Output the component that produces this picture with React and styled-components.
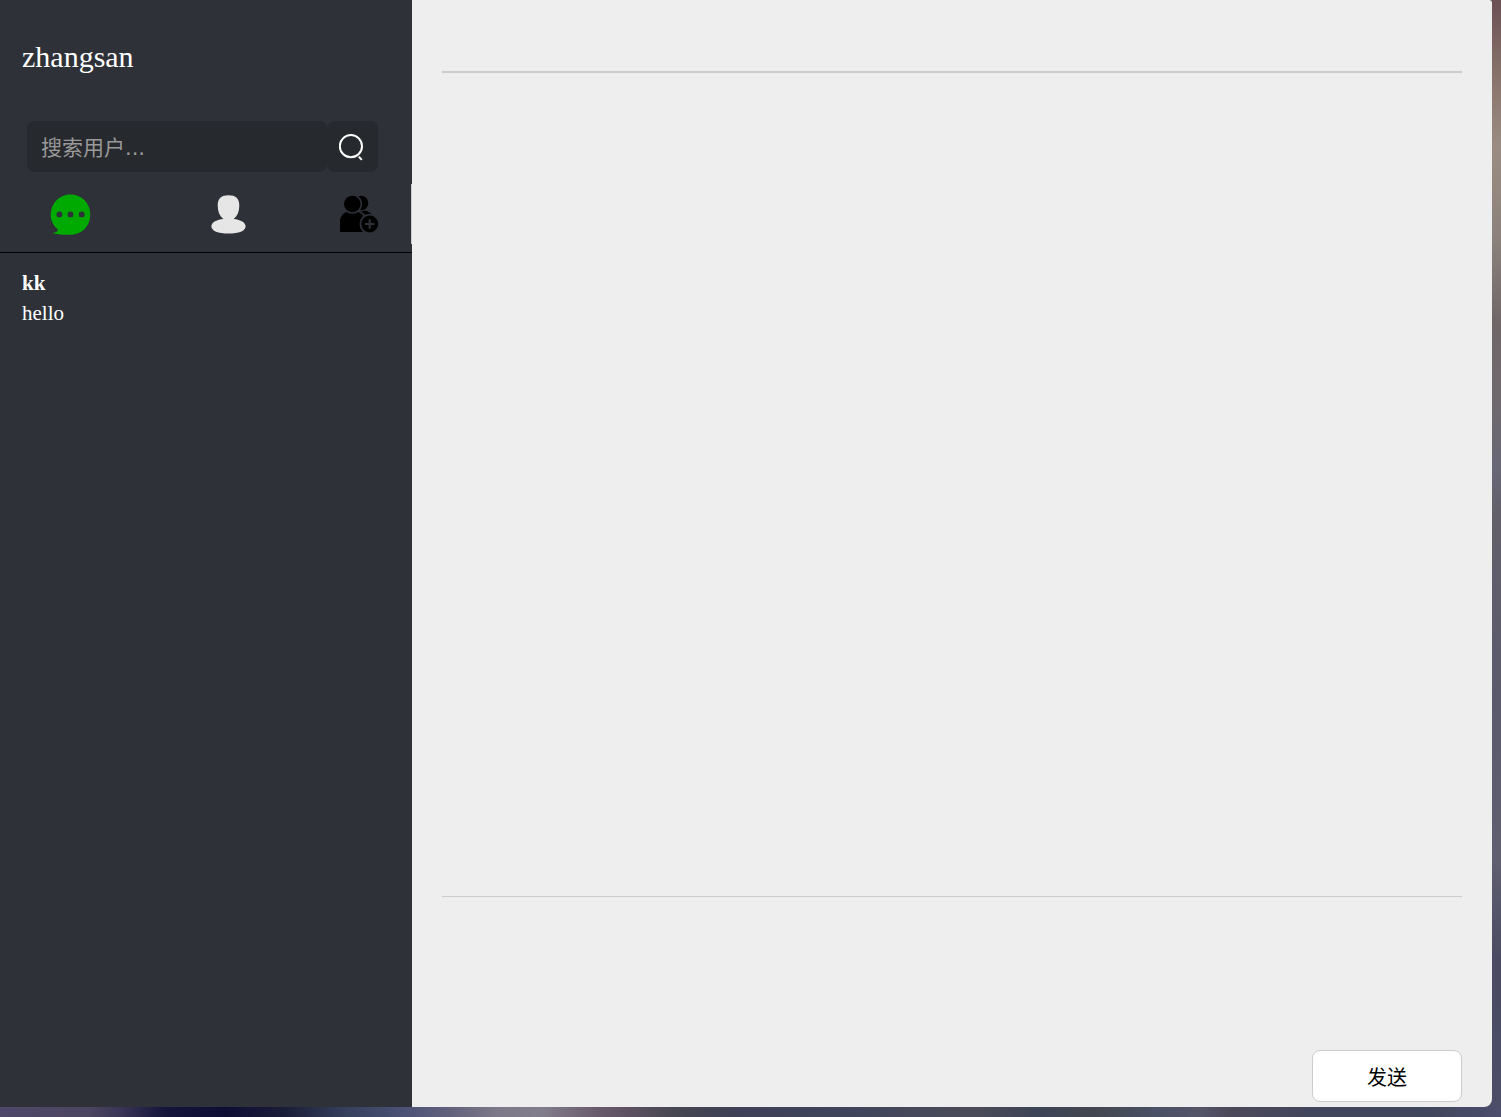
import React from "react";
import styled, { createGlobalStyle } from "styled-components";

const SIDEBAR_WIDTH = 412;
const SIDEBAR_COLOR = "#2e3138";
const FIELD_COLOR = "#26292d";
const LINE_COLOR = "#ccc";
const PANEL_COLOR = "#eee";
const UI_FONT = `"DejaVu Sans", "Noto Sans CJK SC", sans-serif`;

const GlobalStyle = createGlobalStyle`
    * {
        box-sizing: border-box;
    }
    body {
        margin: 0;
        font-family: "Liberation Serif", "Noto Sans CJK SC", serif;
    }
`;

const Desktop = styled.div`
    display: flex;
    min-height: 100vh;
    padding: 0 9px 10px 0;
    background:
        linear-gradient(to right,
            #50486a 0%, #4c4560 6%, #3a3556 8%, #15143a 11%, #0e0e34 15%,
            #1a1d38 19%, #35405c 23%, #4c5276 27%, #62617c 30%, #7c7889 33%,
            #827d8c 36%, #68596a 40%, #5c5060 42%, #464751 45%, #3d4056 49%,
            #40455c 57%, #4a4b58 65%, #3d4357 69%, #434750 73%, #4a5066 77%,
            #545468 80%, #4c485a 82%, #42465c 87%, #40465c 95%, #4c4e6c 100%)
        left bottom / 100% 10px no-repeat,
        linear-gradient(to bottom,
            #6b5054 0%, #857068 6%, #9a8c82 13%, #8d837c 21%, #706668 29%,
            #6f696e 36%, #686776 42%, #625f6a 46%, #5a5a6c 63%, #605f70 77%,
            #4a4a62 86%, #4c4e68 100%);
`;

const ChatWindow = styled.div`
    display: flex;
    flex: 1;
    border-radius: 0 3px 8px 0;
    overflow: hidden;
    background-color: ${PANEL_COLOR};
`;

const Sidebar = styled.aside`
    flex: 0 0 ${SIDEBAR_WIDTH}px;
    background-color: ${SIDEBAR_COLOR};
    color: white;
`;

const UserName = styled.h1`
    margin: 0;
    padding: 39px 22px 46px;
    font-size: 30px;
    font-weight: normal;
    line-height: 36px;
`;

const SearchForm = styled.form`
    display: flex;
    margin: 0 34px 12px 27px;
`;

const SearchInput = styled.input`
    flex: 1;
    min-width: 0;
    height: 51px;
    padding: 2px 14px 0;
    border: 0;
    border-radius: 8px;
    outline: none;
    background-color: ${FIELD_COLOR};
    color: white;
    font-family: ${UI_FONT};
    font-size: 21px;

    &::placeholder {
        color: #999;
        opacity: 1;
    }
`;

const SearchButton = styled.button`
    display: flex;
    align-items: center;
    justify-content: center;
    width: 51px;
    height: 51px;
    padding: 0;
    border: 0;
    border-radius: 8px;
    background-color: ${FIELD_COLOR};
    cursor: pointer;
`;

const Tabs = styled.nav`
    display: grid;
    grid-template-columns: 34% 43% 1fr;
    padding-bottom: 8px;
    border-bottom: 1px solid black;
`;

const Tab = styled.button`
    display: flex;
    align-items: center;
    justify-content: center;
    height: 60px;
    padding: 0 ${props => props.$last ? 10 : 0}px 0 0;
    border: 0;
    border-right: ${props => props.$last ? `1px solid ${LINE_COLOR}` : "0"};
    background: none;
    cursor: pointer;
`;

const ChatList = styled.ul`
    margin: 0;
    padding: 15px 0 0;
    list-style: none;
`;

const ChatItem = styled.li`
    padding: 0 22px;
    font-size: 21px;
    line-height: 30px;
`;

const ChatName = styled.div`
    font-weight: bold;
`;

const ChatPreview = styled.div`
    font-weight: normal;
`;

const Conversation = styled.main`
    display: flex;
    flex: 1;
    flex-direction: column;
    min-width: 0;
    padding: 0 30px 5px;
`;

const ConversationHeader = styled.header`
    height: 73px;
    border-bottom: 2px solid ${LINE_COLOR};
`;

const MessageList = styled.section`
    flex: 1;
`;

const Editor = styled.form`
    display: flex;
    flex-direction: column;
    align-items: flex-end;
    border-top: 1px solid ${LINE_COLOR};
`;

const MessageInput = styled.textarea`
    width: 100%;
    height: 153px;
    padding: 12px 0;
    border: 0;
    outline: none;
    resize: none;
    background: none;
    font-family: ${UI_FONT};
    font-size: 21px;
`;

const SendButton = styled.button`
    width: 150px;
    height: 52px;
    padding: 0;
    border: 1px solid ${LINE_COLOR};
    border-radius: 8px;
    background-color: white;
    color: black;
    font-family: ${UI_FONT};
    font-size: 20px;
    cursor: pointer;
`;

const SearchIcon = () => (
    <svg width="28" height="28" viewBox="0 0 28 28" fill="none" stroke="white" strokeWidth="2">
        <circle cx="11.9" cy="13.2" r="11.1" />
        <path d="M19.8 23.6 L22.8 26.9" />
    </svg>
);

const ChatIcon = () => (
    <svg width="41" height="41" viewBox="0 0 41 41">
        <path
            fill="#00aa00"
            d="M20.5 0.6 A19.8 19.6 0 0 1 40.3 20.2 C40.3 31.7 32.5 39.8 22 40.7 C15 41 8 40.5 2 38.9 C4.6 38.8 6.8 38.2 7.6 36.8 C7.9 36 7.6 35.3 6.9 34.6 C3 31.2 0.7 26.2 0.7 20.2 A19.8 19.6 0 0 1 20.5 0.6 Z"
        />
        <g fill={SIDEBAR_COLOR}>
            <circle cx="9.4" cy="20.4" r="2.9" />
            <circle cx="20.5" cy="20.4" r="2.9" />
            <circle cx="31.7" cy="20.4" r="2.9" />
        </g>
    </svg>
);

const ContactIcon = () => (
    <svg width="35" height="41" viewBox="0 0 35 41" fill="#e6e6e6">
        <path d="M17.5 1.3 C25 1.3 28.3 4.5 28.3 11.5 C28.3 17.5 26.4 22 22.6 25 C30 25.6 34.6 28.8 34.6 32.3 C34.6 37 28 39.6 17.5 39.6 C7 39.6 0.4 37 0.4 32.3 C0.4 28.8 5 25.6 12.4 25 C8.6 22 6.7 17.5 6.7 11.5 C6.7 4.5 10 1.3 17.5 1.3 Z" />
    </svg>
);

const AddGroupIcon = () => (
    <svg width="40" height="38" viewBox="0 0 40 38">
        <circle cx="22" cy="8" r="7.3" />
        <path d="M21.6 16.4 L26 15.4 C29.4 16.2 32 18 33.6 20.4 L28 24 Z" />
        <circle cx="13.3" cy="9" r="9.9" fill={SIDEBAR_COLOR} />
        <path
            fill="none"
            stroke={SIDEBAR_COLOR}
            strokeWidth="1.6"
            d="M19.6 16.2 C23.4 17.6 26.2 20 27.6 24"
        />
        <circle cx="13.3" cy="9" r="8.3" />
        <path d="M1 37 L1 26.5 C1 22 3.4 18.6 7.3 17 C11 19.2 15.6 19.2 19.3 17 C23.2 18.5 26 22 26 26.5 L26 37 Z" />
        <circle cx="30.7" cy="29" r="10.2" fill={SIDEBAR_COLOR} />
        <circle cx="30.7" cy="29" r="8.4" />
        <path d="M26 29 H35.4 M30.7 24.3 V33.7" stroke={SIDEBAR_COLOR} strokeWidth="2.1" />
    </svg>
);

const chats = [
    { name: "kk", preview: "hello" },
];

export default class App extends React.Component {

    handleSubmit = (e) => {
        e.preventDefault();
    }

    render() {
        return (
            <Desktop>
                <GlobalStyle />
                <ChatWindow>
                    <Sidebar>
                        <UserName>zhangsan</UserName>
                        <SearchForm onSubmit={this.handleSubmit}>
                            <SearchInput type="text" placeholder="搜索用户..." aria-label="搜索用户" />
                            <SearchButton type="submit" aria-label="搜索">
                                <SearchIcon />
                            </SearchButton>
                        </SearchForm>
                        <Tabs>
                            <Tab type="button" aria-label="聊天"><ChatIcon /></Tab>
                            <Tab type="button" aria-label="联系人"><ContactIcon /></Tab>
                            <Tab type="button" aria-label="添加" $last><AddGroupIcon /></Tab>
                        </Tabs>
                        <ChatList>
                            {chats.map(chat => (
                                <ChatItem key={chat.name}>
                                    <ChatName>{chat.name}</ChatName>
                                    <ChatPreview>{chat.preview}</ChatPreview>
                                </ChatItem>
                            ))}
                        </ChatList>
                    </Sidebar>
                    <Conversation>
                        <ConversationHeader />
                        <MessageList />
                        <Editor onSubmit={this.handleSubmit}>
                            <MessageInput aria-label="消息" />
                            <SendButton type="submit">发送</SendButton>
                        </Editor>
                    </Conversation>
                </ChatWindow>
            </Desktop>
        );
    }
}
